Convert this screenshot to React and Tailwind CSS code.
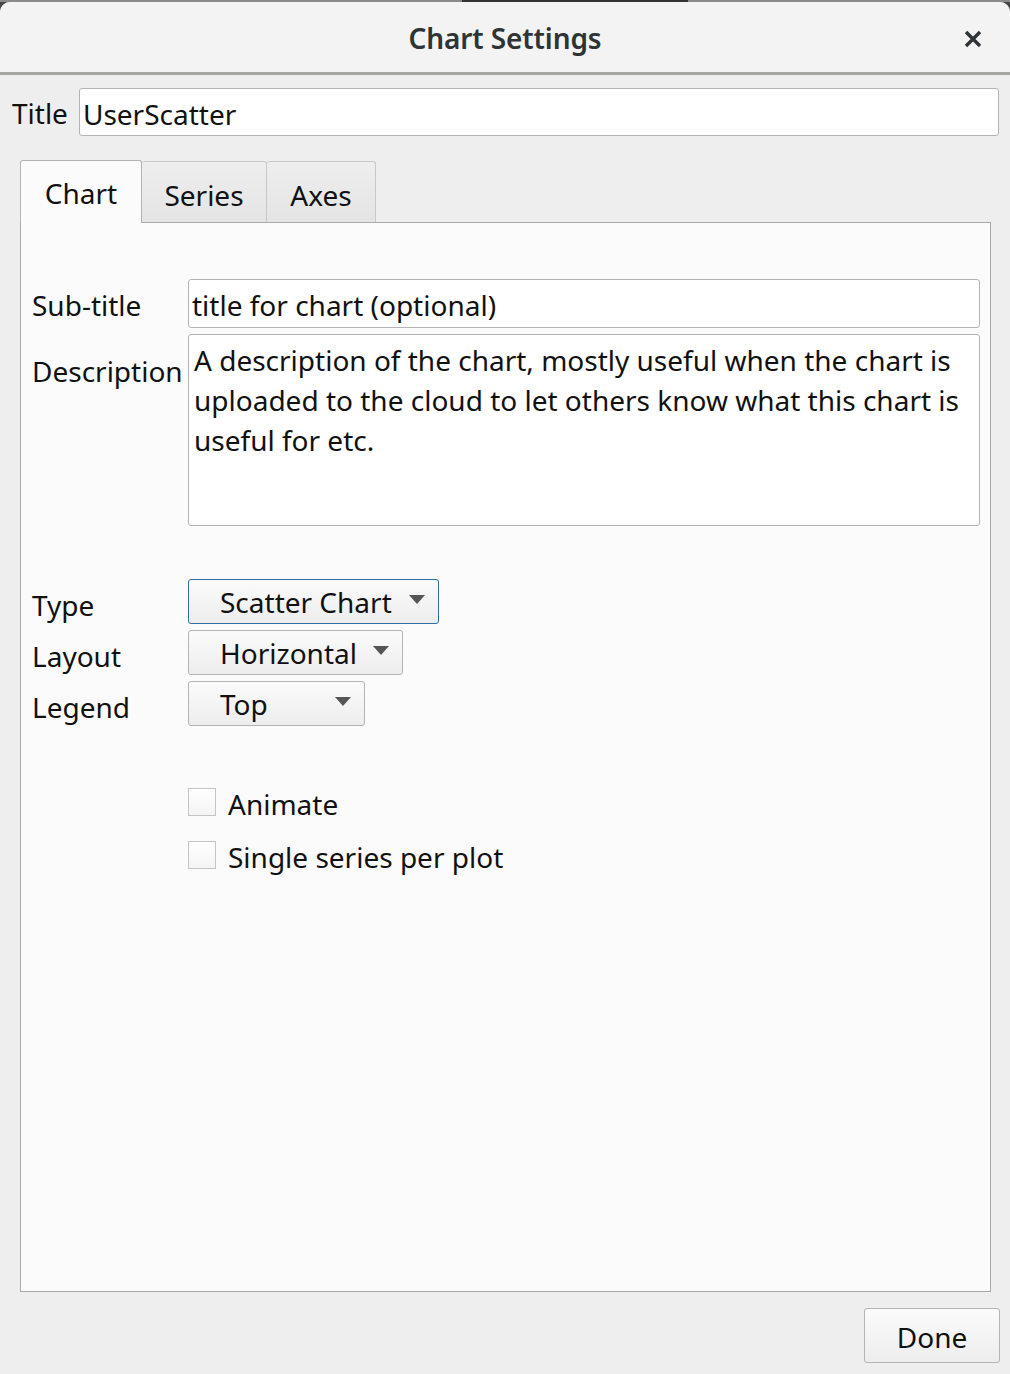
import { useState } from "react";

const Combo = ({ label, width, focused }) => (
    <div
        className={`flex items-center h-[45px] rounded-[3px] border bg-gradient-to-b from-[#fbfbfb] to-[#ededed] ${focused ? "border-[#2f6fa3]" : "border-[#b4b4b4]"} ${width}`}
    >
        <span className="pl-[31px] flex-1 text-[#111]">{label}</span>
        <svg width="16" height="9" viewBox="0 0 16 9" className="mr-[13px] mb-[4px]">
            <polygon points="0,0 16,0 8,9" fill="#555" />
        </svg>
    </div>
);

const Check = ({ label, checked, onChange }) => (
    <label className="flex items-center gap-[12px] h-[28px] cursor-pointer">
        <span
            onClick={onChange}
            className="w-[28px] h-[28px] shrink-0 border border-[#c4c4c4] bg-gradient-to-b from-white to-[#f4f4f4] flex items-center justify-center"
        >
            {checked && <span className="text-[18px] leading-none">✓</span>}
        </span>
        <span className="text-[#111] pt-[4px]">{label}</span>
    </label>
);

const tabs = [
    { name: "Chart", w: "w-[122px]" },
    { name: "Series", w: "w-[125px]" },
    { name: "Axes", w: "w-[109px]" },
];

const App = () => {
    const [tab, setTab] = useState("Chart");
    const [animate, setAnimate] = useState(false);
    const [single, setSingle] = useState(false);

    return (
        <div
            className="w-[1010px] h-[1374px] bg-[#474747] flex flex-col overflow-hidden text-[28px]"
            style={{ fontFamily: '"Noto Sans", "Open Sans", sans-serif' }}
        >
            {/* window top edge */}
            <div className="h-[2px] flex shrink-0">
                <div className="w-[462px] bg-[#8a8a8a]" />
                <div className="w-[226px] bg-[#333]" />
                <div className="flex-1 bg-[#8a8a8a]" />
            </div>

            <div className="flex-1 flex flex-col bg-[#eeeeee] rounded-t-[10px] overflow-hidden">
                {/* Header bar */}
                <div className="h-[73px] shrink-0 bg-[#f3f3f3] border-b-[3px] border-[#a4a4a2] relative flex items-center justify-center">
                    <span className="font-semibold text-[28px] text-[#2e3436] tracking-[-0.1px] mt-[1px]">Chart Settings</span>
                    <svg className="absolute right-[28px] top-[28px]" width="18" height="18" viewBox="0 0 18 18">
                        <path d="M2 2 L16 16 M16 2 L2 16" stroke="#2e3436" strokeWidth="3.4" strokeLinecap="butt" />
                    </svg>
                </div>

                {/* Title row */}
                <div className="flex items-center gap-[11px] pl-[12px] pr-[11px] mt-[13px]">
                    <span className="text-[#111] pt-[2px]">Title</span>
                    <input
                        defaultValue="UserScatter"
                        className="flex-1 h-[48px] bg-white border border-[#b4b4b4] rounded-[3px] px-[3px] pt-[3px] text-[#111] outline-none"
                    />
                </div>

                {/* Tabs */}
                <div className="flex flex-col mx-[20px] mt-[23px] flex-1">
                    <div className="flex items-end h-[63px]">
                        {tabs.map(t => (
                            <button
                                key={t.name}
                                onClick={() => setTab(t.name)}
                                className={
                                    tab === t.name
                                        ? `${t.w} h-[63px] bg-[#fbfbfb] border border-b-0 border-[#b4b4b4] rounded-t-[3px] text-[#111] relative z-10 -mb-[1px] pt-[2px]`
                                        : `${t.w} h-[61px] bg-gradient-to-b from-[#eeeeee] to-[#e4e4e4] border border-l-0 border-b-0 border-[#c8c8c8] rounded-t-[3px] text-[#111] pt-[6px]`
                                }
                            >
                                {t.name}
                            </button>
                        ))}
                    </div>

                    <div className="w-[971px] h-[1070px] bg-[#fbfbfb] border border-[#a8a8a8] flex flex-col pl-[11px] pr-[10px] pt-[56px]">
                        {/* Sub-title */}
                        <div className="flex items-center">
                            <span className="w-[156px] text-[#111] pt-[2px]">Sub-title</span>
                            <input
                                defaultValue="title for chart (optional)"
                                className="flex-1 h-[49px] bg-white border border-[#b4b4b4] rounded-[3px] px-[3px] pt-[2px] text-[#111] outline-none"
                            />
                        </div>

                        {/* Description */}
                        <div className="flex mt-[6px]">
                            <span className="w-[156px] text-[#111] pt-[16px]">Description</span>
                            <textarea
                                defaultValue="A description of the chart, mostly useful when the chart is uploaded to the cloud to let others know what this chart is useful for etc."
                                className="flex-1 h-[192px] bg-white border border-[#b4b4b4] rounded-[3px] pl-[5px] pr-[6px] pt-[5px] leading-[40px] text-[#111] resize-none outline-none"
                            />
                        </div>

                        {/* Combos */}
                        <div className="flex flex-col gap-[6px] mt-[53px]">
                            <div className="flex items-center h-[45px]">
                                <span className="w-[156px] text-[#111] leading-[36px] pt-[6px]">Type</span>
                                <Combo label="Scatter Chart" width="w-[251px]" focused />
                            </div>
                            <div className="flex items-center h-[45px]">
                                <span className="w-[156px] text-[#111] leading-[36px] pt-[6px]">Layout</span>
                                <Combo label="Horizontal" width="w-[215px]" />
                            </div>
                            <div className="flex items-center h-[45px]">
                                <span className="w-[156px] text-[#111] leading-[36px] pt-[6px]">Legend</span>
                                <Combo label="Top" width="w-[177px]" />
                            </div>
                        </div>

                        {/* Checkboxes */}
                        <div className="flex flex-col gap-[25px] mt-[62px] pl-[156px]">
                            <Check label="Animate" checked={animate} onChange={() => setAnimate(!animate)} />
                            <Check label="Single series per plot" checked={single} onChange={() => setSingle(!single)} />
                        </div>
                    </div>
                </div>

                {/* Footer */}
                <div className="flex justify-end pr-[10px] pt-[16px] pb-[11px]">
                    <button className="w-[136px] h-[55px] rounded-[3px] border border-[#b4b4b4] bg-gradient-to-b from-[#fbfbfb] to-[#ededed] text-[#111] pt-[2px]">
                        Done
                    </button>
                </div>
            </div>
        </div>
    );
};

export default App;
